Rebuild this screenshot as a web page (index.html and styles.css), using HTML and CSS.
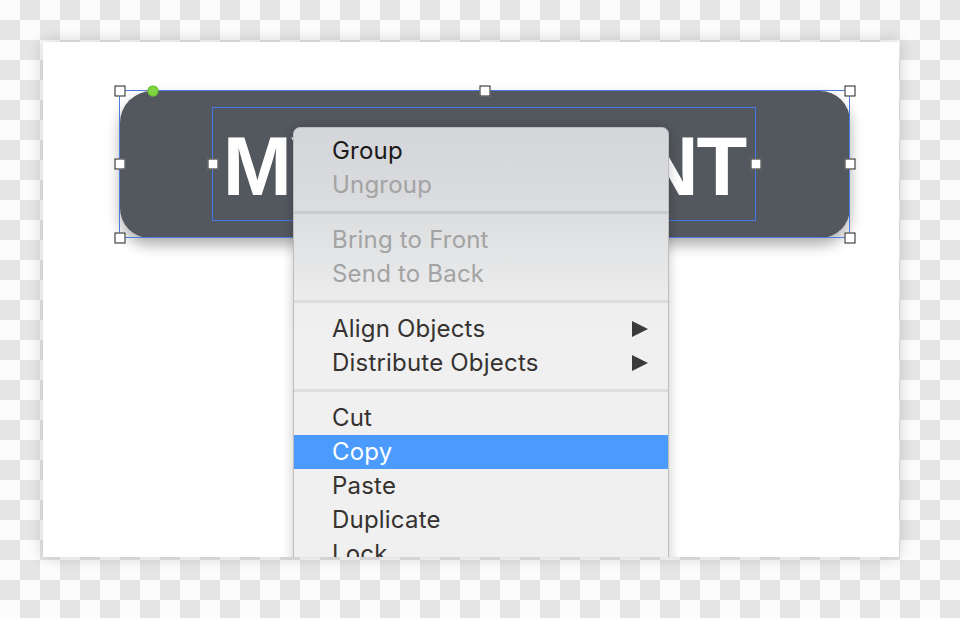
FILE: index.html
```html
<!DOCTYPE html>
<html>
<head>
<meta charset="utf-8">
<title>Context menu</title>
<link rel="stylesheet" href="styles.css">
</head>
<body>
<div class="canvas">
  <div class="selection">
    <div class="btn">
      <div class="textbox"><span class="label">MY ELEMENT</span></div>
    </div>
    <span class="handle h-tl"></span>
    <span class="handle h-tc"></span>
    <span class="handle h-tr"></span>
    <span class="handle h-ml"></span>
    <span class="handle h-mr"></span>
    <span class="handle h-bl"></span>
    <span class="handle h-br"></span>
    <span class="handle h-tl2"></span>
    <span class="handle h-tr2"></span>
    <span class="rotate"></span>
  </div>
  <div class="menu">
    <div class="item strong">Group</div>
    <div class="item disabled">Ungroup</div>
    <div class="sep sep-top"></div>
    <div class="item disabled">Bring to Front</div>
    <div class="item disabled">Send to Back</div>
    <div class="sep"></div>
    <div class="item"><span>Align Objects</span><span class="arrow"></span></div>
    <div class="item"><span>Distribute Objects</span><span class="arrow"></span></div>
    <div class="sep"></div>
    <div class="item">Cut</div>
    <div class="item active">Copy</div>
    <div class="item">Paste</div>
    <div class="item">Duplicate</div>
    <div class="item">Lock</div>
  </div>
</div>
</body>
</html>
```

FILE: styles.css
```css
html, body {
  margin: 0;
  padding: 0;
}
body {
  width: 960px;
  height: 618px;
  overflow: hidden;
  background-color: #fff;
  background-image: conic-gradient(#e5e5e5 25%, #fcfcfc 0 50%, #e5e5e5 0 75%, #fcfcfc 0);
  background-size: 40px 40px;
  padding-top: 42px;
  padding-left: 43px;
  box-sizing: border-box;
}
.canvas {
  position: relative;
  width: 856px;
  height: 515px;
  background: #fff;
  overflow: hidden;
  box-shadow: 0 0 14px rgba(0, 0, 0, 0.18);
}
.selection {
  position: absolute;
  left: 76px;
  top: 48px;
  width: 731px;
  height: 148px;
}
.selection::after {
  content: "";
  position: absolute;
  inset: 0;
  border: 1px solid #4a7ce0;
  pointer-events: none;
}
.btn {
  position: absolute;
  inset: 1px 0 0 1px;
  background: #53575e;
  border-radius: 32px 30px 30px 30px;
  box-shadow: 0 7px 14px rgba(0, 0, 0, 0.32);
}
.textbox {
  position: absolute;
  left: 92px;
  top: 16px;
  width: 544px;
  height: 114px;
  box-sizing: border-box;
  border: 1px solid #4577e6;
  display: flex;
  align-items: center;
  justify-content: center;
}
.label {
  font-family: "Liberation Sans", Arial, sans-serif;
  font-weight: bold;
  font-size: 83px;
  line-height: 1;
  color: #fff;
  letter-spacing: -2px;
  white-space: nowrap;
  margin-top: 4px;
}
.handle {
  position: absolute;
  width: 11px;
  height: 11px;
  box-sizing: border-box;
  background: #fff;
  border: 1.5px solid #1e1e1e;
  transform: translate(-50%, -50%);
  z-index: 2;
}
.h-tl { left: 0.5px; top: 0.5px; }
.h-tc { left: 365.5px; top: 0.5px; }
.h-tr { left: 730.5px; top: 0.5px; }
.h-ml { left: 0.5px; top: 73.5px; }
.h-mr { left: 730.5px; top: 73.5px; }
.h-bl { left: 0.5px; top: 147.5px; }
.h-br { left: 730.5px; top: 147.5px; }
.h-tl2 { left: 93.5px; top: 73.5px; }
.h-tr2 { left: 636.5px; top: 73.5px; }
.rotate {
  position: absolute;
  left: 33.5px;
  top: 0.5px;
  width: 11px;
  height: 11px;
  border-radius: 50%;
  background: #7fd640;
  box-shadow: inset 0 0 0 1px #62bb2e;
  transform: translate(-50%, -50%);
  z-index: 2;
}
.menu {
  position: absolute;
  left: 250px;
  top: 85px;
  width: 376px;
  box-sizing: border-box;
  padding: 6px 0 40px;
  border: 1px solid #bdbdbd;
  border-radius: 7px 7px 0 0;
  background: linear-gradient(#d5d6d9 0, #dadbde 70px, #e4e5e6 130px, #eeeeee 180px, #f0f0f0 210px, #f0f0f0 100%);
  box-shadow: 0 2px 12px rgba(0, 0, 0, 0.22);
  z-index: 5;
  font-family: "Inter", "Noto Sans", sans-serif;
  font-size: 24px;
}
.item {
  height: 34px;
  line-height: 34px;
  padding: 0 20px 0 38px;
  display: flex;
  justify-content: space-between;
  align-items: center;
  color: #353230;
  white-space: nowrap;
  letter-spacing: 0.2px;
}
.item.strong {
  color: #1a1a1a;
}
.item.disabled {
  color: #a3a3a3;
}
.item.active {
  background: #4b9bff;
  color: #fff;
}
.sep {
  height: 3px;
  margin: 9px 0;
  background: #dddddd;
}
.sep.sep-top {
  background: #c9cacd;
}
.arrow {
  width: 0;
  height: 0;
  border-left: 16px solid #3a3a3a;
  border-top: 8.5px solid transparent;
  border-bottom: 8.5px solid transparent;
}
```
